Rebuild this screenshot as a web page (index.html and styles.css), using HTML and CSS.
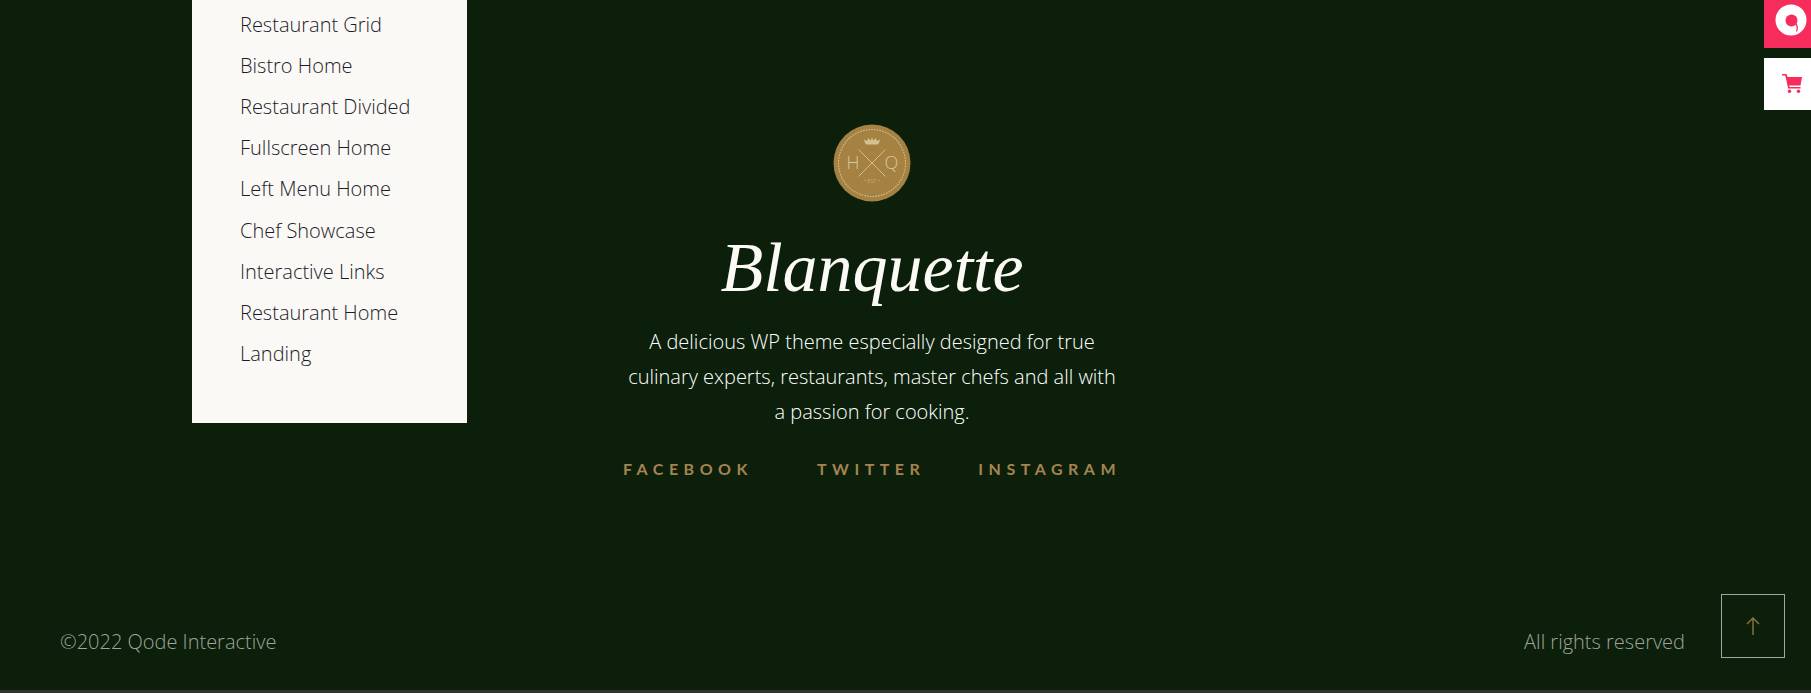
FILE: index.html
```html
<!DOCTYPE html>
<html lang="en">
<head>
<meta charset="utf-8">
<title>Blanquette</title>
<link rel="stylesheet" href="styles.css">
</head>
<body>
<div class="page">
  <main class="main">
    <nav class="menu">
      <ul class="menu-list">
        <li>Restaurant Grid</li>
        <li>Bistro Home</li>
        <li>Restaurant Divided</li>
        <li>Fullscreen Home</li>
        <li>Left Menu Home</li>
        <li>Chef Showcase</li>
        <li>Interactive Links</li>
        <li>Restaurant Home</li>
        <li>Landing</li>
      </ul>
    </nav>
    <section class="about">
      <svg class="logo" viewBox="0 0 78 78" aria-hidden="true">
        <circle cx="39" cy="39" r="38.5" fill="#a58242"/>
        <circle cx="39" cy="39" r="33.5" fill="none" stroke="#d3c093" stroke-width="1.100" stroke-dasharray="1.600 1.200"/>
        <path d="M33 20.500l-2.500-5 3.500 1.500 1.200-3 2.300 2.400 1.500-3 1.500 3 2.300-2.400 1.200 3 3.500-1.500-2.500 5z" fill="#d3c093"/>
        <path d="M25.500 25.500l27 27M52.500 25.500l-27 27" fill="none" stroke="#d3bd8c" stroke-width="1"/>
        <text class="logo-letter" x="20" y="45">H</text>
        <text class="logo-letter" x="58.500" y="45">Q</text>
        <text class="logo-year" x="39" y="59">• EST •</text>
      </svg>
      <h1 class="title">Blanquette</h1>
      <p class="lead">A delicious WP theme especially designed for true culinary experts, restaurants, master chefs and all with a passion for cooking.</p>
      <div class="socials">
        <a class="social social-facebook">FACEBOOK</a>
        <a class="social social-twitter">TWITTER</a>
        <a class="social">INSTAGRAM</a>
      </div>
    </section>
  </main>
  <footer class="footer">
    <span class="foot-text">©2022 Qode Interactive</span>
    <div class="foot-right">
      <span class="foot-text">All rights reserved</span>
      <a class="to-top">
        <svg viewBox="0 0 14 18" width="14" height="18" aria-hidden="true"><path d="M7 18V1M1 7l6-6 6 6" fill="none" stroke="#85703f" stroke-width="1.500"/></svg>
      </a>
    </div>
  </footer>
  <div class="bottom-bar"></div>
</div>
<aside class="side">
  <a class="side-btn side-pink">
    <svg viewBox="0 0 32 32" width="32" height="32" aria-hidden="true">
      <circle cx="16" cy="16" r="15.500" fill="#fff"/>
      <circle cx="16.500" cy="16.500" r="6" fill="#f52c5c"/>
      <path d="M21 20c1.500 2 1.500 5 .5 7.500" fill="none" stroke="#f52c5c" stroke-width="1.300"/>
    </svg>
  </a>
  <a class="side-btn side-white">
    <svg viewBox="0 0 20 19" width="20" height="19" aria-hidden="true">
      <path d="M0 0h4.500l1 3H20l-1.500 8.500H7.200l.4 1.500H18.500v1.500H6.200L3.300 1.600H0z" fill="#f52c5c"/>
      <circle cx="7.500" cy="17.300" r="1.700" fill="#f52c5c"/>
      <circle cx="16.500" cy="17.300" r="1.700" fill="#f52c5c"/>
    </svg>
  </a>
</aside>
</body>
</html>
```
FILE: styles.css
```css
* { box-sizing: border-box; }
html, body { margin: 0; height: 100%; }
body {
  background: #0c1f0b;
  font-family: "Open Sans", sans-serif;
  font-weight: 300;
  overflow: hidden;
}
.page {
  height: 693px;
  display: flex;
  flex-direction: column;
}
.main {
  height: 589px;
  display: flex;
  align-items: flex-start;
  padding-left: 192px;
}
.menu {
  width: 275px;
  height: 423px;
  background: #fbf9f6;
  padding: 3.500px 0 0 48px;
}
.menu-list {
  list-style: none;
  margin: 0;
  padding: 0;
  color: #1c1c28;
  font-size: 20px;
  line-height: 41.200px;
}
.about {
  width: 490px;
  margin-left: 160px;
  padding-top: 124px;
  display: flex;
  flex-direction: column;
  align-items: center;
  text-align: center;
}
.logo { width: 78px; height: 78px; display: block; }
.logo-letter { font-family: "Open Sans", sans-serif; font-size: 18px; font-weight: 300; fill: #d9c79c; text-anchor: middle; }
.logo-year { font-family: "Open Sans", sans-serif; font-size: 5.500px; fill: #d9c79c; text-anchor: middle; }
.title {
  margin: 26px 0 0;
  font-family: "Liberation Serif", serif;
  font-style: italic;
  font-weight: 400;
  font-size: 70px;
  line-height: 80px;
  color: #fbfaf5;
}
.lead {
  margin: 16px 0 0;
  width: 490px;
  font-size: 20px;
  line-height: 35px;
  color: #fff;
}
.socials {
  margin-top: 25px;
  display: flex;
  white-space: nowrap;
}
.social {
  font-family: "Lato", sans-serif;
  font-weight: 700;
  font-size: 16px;
  line-height: 30px;
  letter-spacing: 5.500px;
  color: #a5844f;
}
.social-facebook { margin-right: 64px; }
.social-twitter { margin-right: 53px; }
.footer {
  flex: 1;
  display: flex;
  justify-content: space-between;
  align-items: flex-start;
  padding: 5px 26px 0 60px;
}
.foot-right { display: flex; gap: 36px; align-items: flex-start; }
.foot-text {
  margin-top: 33px;
  font-size: 20px;
  line-height: 30px;
  color: #9fa49a;
}
.to-top {
  width: 64px;
  height: 64px;
  border: 1px solid #a3a69e;
  display: flex;
  align-items: center;
  justify-content: center;
}
.bottom-bar { height: 3px; background: #333; }
.side {
  position: fixed;
  top: 0;
  right: 0;
  width: 47px;
  display: flex;
  flex-direction: column;
  gap: 10px;
}
.side-btn { display: flex; align-items: center; justify-content: center; }
.side-pink { height: 48px; background: #f52c5c; padding-bottom: 8px; padding-left: 6px; }
.side-white { height: 52px; background: #fff; padding-left: 9px; padding-bottom: 1px; }
```
